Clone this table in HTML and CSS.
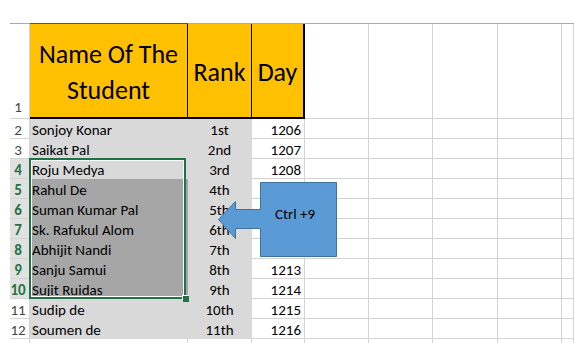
FILE: index.html
```html
<!DOCTYPE html>
<html>
<head>
<meta charset="utf-8">
<link rel="stylesheet" href="styles.css">
</head>
<body>
<div class="sheet">
  <div class="pad"></div><div class="ch"></div><div class="ch ch-sel"></div><div class="ch"></div><div class="ch"></div><div class="ch"></div><div class="ch"></div><div class="ch"></div><div class="ch"></div><div class="ch"></div>

  <div class="pad"></div><div class="rh rh-top">1</div>
  <div class="hd">Name Of The<br>Student</div><div class="hd">Rank</div><div class="hd hd-last">Day</div>
  <div class="e"></div><div class="e"></div><div class="e"></div><div class="e"></div><div class="e"></div>

  <div class="pad"></div><div class="rh">2</div><div class="c na">Sonjoy Konar</div><div class="c rk">1st</div><div class="c dy">1206</div><div class="e"></div><div class="e"></div><div class="e"></div><div class="e"></div><div class="e"></div>
  <div class="pad"></div><div class="rh">3</div><div class="c na">Saikat Pal</div><div class="c rk">2nd</div><div class="c dy">1207</div><div class="e"></div><div class="e"></div><div class="e"></div><div class="e"></div><div class="e"></div>
  <div class="pad"></div><div class="rh sel">4</div><div class="c na">Roju Medya</div><div class="c rk">3rd</div><div class="c dy">1208</div><div class="e"></div><div class="e"></div><div class="e"></div><div class="e"></div><div class="e"></div>
  <div class="pad"></div><div class="rh sel">5</div><div class="c na dk">Rahul De</div><div class="c rk">4th</div><div class="c dy"></div><div class="e"></div><div class="e"></div><div class="e"></div><div class="e"></div><div class="e"></div>
  <div class="pad"></div><div class="rh sel">6</div><div class="c na dk">Suman Kumar Pal</div><div class="c rk">5th</div><div class="c dy"></div><div class="e"></div><div class="e"></div><div class="e"></div><div class="e"></div><div class="e"></div>
  <div class="pad"></div><div class="rh sel">7</div><div class="c na dk">Sk. Rafukul Alom</div><div class="c rk">6th</div><div class="c dy"></div><div class="e"></div><div class="e"></div><div class="e"></div><div class="e"></div><div class="e"></div>
  <div class="pad"></div><div class="rh sel">8</div><div class="c na dk">Abhijit Nandi</div><div class="c rk">7th</div><div class="c dy"></div><div class="e"></div><div class="e"></div><div class="e"></div><div class="e"></div><div class="e"></div>
  <div class="pad"></div><div class="rh sel">9</div><div class="c na dk">Sanju Samui</div><div class="c rk">8th</div><div class="c dy">1213</div><div class="e"></div><div class="e"></div><div class="e"></div><div class="e"></div><div class="e"></div>
  <div class="pad"></div><div class="rh sel">10</div><div class="c na dk">Sujit Ruidas</div><div class="c rk">9th</div><div class="c dy">1214</div><div class="e"></div><div class="e"></div><div class="e"></div><div class="e"></div><div class="e"></div>
  <div class="pad"></div><div class="rh">11</div><div class="c na">Sudip de</div><div class="c rk">10th</div><div class="c dy">1215</div><div class="e"></div><div class="e"></div><div class="e"></div><div class="e"></div><div class="e"></div>
  <div class="pad"></div><div class="rh">12</div><div class="c na">Soumen de</div><div class="c rk">11th</div><div class="c dy">1216</div><div class="e"></div><div class="e"></div><div class="e"></div><div class="e"></div><div class="e"></div>
  <div class="pad"></div><div class="rh"></div><div class="e"></div><div class="e"></div><div class="e"></div><div class="e"></div><div class="e"></div><div class="e"></div><div class="e"></div><div class="e"></div>

  <div class="selbox"></div>
  <div class="handle"></div>

  <svg class="callout" width="574" height="343" viewBox="0 0 574 343">
    <polygon points="260.5,182.5 336.5,182.5 336.5,256.5 260.5,256.5 260.5,228.5 235.5,228.5 235.5,238.5 218.5,219.5 235.5,201.5 235.5,209.5 260.5,209.5" fill="#5b9bd5" stroke="#41719c" stroke-width="1"/>
  </svg>
  <div class="callout-text">Ctrl +9</div>
</div>
</body>
</html>
```

FILE: styles.css
```css
html, body {
  margin: 0;
  padding: 0;
  background: #ffffff;
}

body {
  font-family: Carlito, Calibri, Lato, "Open Sans", sans-serif;
  color: #000;
  overflow: hidden;
  width: 574px;
  height: 343px;
}

.sheet {
  position: relative;
  display: grid;
  grid-template-columns: 10px 20px 158px 64px 53px 64px 64px 65px 64px 1fr;
  grid-template-rows: 24px 95px repeat(12, 20px);
  grid-auto-rows: 20px;
}

.sheet > div {
  box-sizing: border-box;
  min-width: 0;
}

.ch {
  border-bottom: 1px solid #ababab;
}

.ch-sel {
  border-bottom-color: #217346;
}

.e {
  border-right: 1px solid #d4d4d4;
  border-bottom: 1px solid #d4d4d4;
}

.rh {
  border-right: 1px solid #d4d4d4;
  border-bottom: 1px solid #d4d4d4;
  font-size: 15px;
  line-height: 19px;
  padding-top: 2px;
  padding-right: 3px;
  text-align: center;
  color: #444;
  white-space: nowrap;
}

.rh-top {
  display: flex;
  align-items: flex-end;
  justify-content: center;
  padding-top: 0;
  padding-bottom: 1px;
}

.rh.sel {
  background: #e1e1e1;
  color: #217346;
  font-weight: bold;
}

.hd {
  background: #ffc000;
  border-right: 1px solid #000;
  border-bottom: 2px solid #000;
  display: flex;
  align-items: center;
  justify-content: center;
  text-align: center;
  font-size: 26px;
  line-height: 36px;
  padding-top: 2px;
  white-space: nowrap;
}

.hd-last {
  border-right-width: 2px;
}

.c {
  font-size: 15px;
  line-height: 19px;
  padding-top: 2px;
  white-space: nowrap;
}

.na {
  background: #d9d9d9;
  border-right: 1px solid #d9d9d9;
  border-bottom: 1px solid #d9d9d9;
  padding-left: 2px;
}

.na.dk {
  background: #a6a6a6;
  border-color: #a6a6a6;
}

.rk {
  background: #d9d9d9;
  border-right: 1px solid #d9d9d9;
  border-bottom: 1px solid #d9d9d9;
  text-align: center;
}

.dy {
  border-right: 1px solid #d4d4d4;
  border-bottom: 1px solid #d4d4d4;
  text-align: right;
  padding-right: 3px;
}

.selbox {
  position: absolute;
  left: 29px;
  top: 158px;
  width: 157px;
  height: 141px;
  border: 2px solid #217346;
  box-shadow: inset 0 0 0 1px #ffffff;
}

.handle {
  position: absolute;
  left: 183px;
  top: 296px;
  width: 6px;
  height: 6px;
  background: #217346;
  box-shadow: -1px -1px 0 #ffffff;
}

.callout {
  position: absolute;
  left: 0;
  top: 0;
  pointer-events: none;
}

.callout-text {
  position: absolute;
  left: 261px;
  top: 204px;
  width: 68px;
  text-align: center;
  font-size: 15px;
  line-height: 20px;
  color: #000;
}
```
